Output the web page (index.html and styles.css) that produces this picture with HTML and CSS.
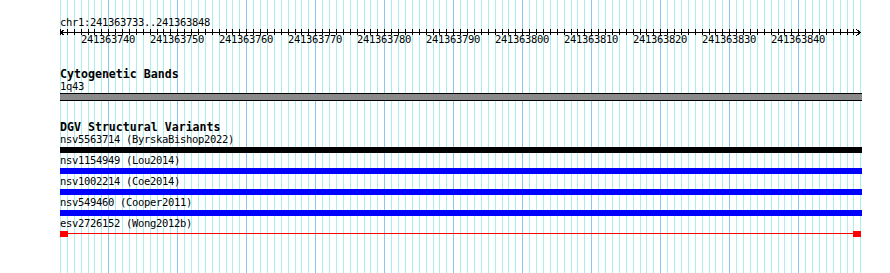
FILE: index.html
```html
<!DOCTYPE html>
<html>
<head>
<meta charset="utf-8">
<link rel="stylesheet" href="styles.css">
</head>
<body>
<div class="browser">
  <div class="canvas">
    <div class="ruler-track">
      <div class="pos">chr1:241363733..241363848</div>
      <svg class="ruler" width="802" height="18" viewBox="0 0 802 18">
        <path class="axis" d="M0 4.5H801M4.5 1.5L0.5 4.5L4.5 7.5M796.5 1.5L800.5 4.5L796.5 7.5"/>
        <path class="axis" d="M0.5 1v6M7.5 1v6M14.5 1v6M21.5 1v6M28.5 1v6M34.5 1v6M41.5 1v6M48.5 1v6M55.5 1v6M62.5 1v6M69.5 1v6M76.5 1v6M83.5 1v6M90.5 1v6M97.5 1v6M103.5 1v6M110.5 1v6M117.5 1v6M124.5 1v6M131.5 1v6M138.5 1v6M145.5 1v6M152.5 1v6M159.5 1v6M166.5 1v6M172.5 1v6M179.5 1v6M186.5 1v6M193.5 1v6M200.5 1v6M207.5 1v6M214.5 1v6M221.5 1v6M228.5 1v6M235.5 1v6M241.5 1v6M248.5 1v6M255.5 1v6M262.5 1v6M269.5 1v6M276.5 1v6M283.5 1v6M290.5 1v6M297.5 1v6M304.5 1v6M310.5 1v6M317.5 1v6M324.5 1v6M331.5 1v6M338.5 1v6M345.5 1v6M352.5 1v6M359.5 1v6M366.5 1v6M373.5 1v6M379.5 1v6M386.5 1v6M393.5 1v6M400.5 1v6M407.5 1v6M414.5 1v6M421.5 1v6M428.5 1v6M435.5 1v6M442.5 1v6M448.5 1v6M455.5 1v6M462.5 1v6M469.5 1v6M476.5 1v6M483.5 1v6M490.5 1v6M497.5 1v6M504.5 1v6M511.5 1v6M517.5 1v6M524.5 1v6M531.5 1v6M538.5 1v6M545.5 1v6M552.5 1v6M559.5 1v6M566.5 1v6M573.5 1v6M580.5 1v6M586.5 1v6M593.5 1v6M600.5 1v6M607.5 1v6M614.5 1v6M621.5 1v6M628.5 1v6M635.5 1v6M642.5 1v6M649.5 1v6M655.5 1v6M662.5 1v6M669.5 1v6M676.5 1v6M683.5 1v6M690.5 1v6M697.5 1v6M704.5 1v6M711.5 1v6M718.5 1v6M724.5 1v6M731.5 1v6M738.5 1v6M745.5 1v6M752.5 1v6M759.5 1v6M766.5 1v6M773.5 1v6M780.5 1v6M787.5 1v6M793.5 1v6"/>
        <g class="tick-labels">
          <text x="48" y="14.5">241363740</text>
          <text x="117" y="14.5">241363750</text>
          <text x="186" y="14.5">241363760</text>
          <text x="255" y="14.5">241363770</text>
          <text x="324" y="14.5">241363780</text>
          <text x="393" y="14.5">241363790</text>
          <text x="462" y="14.5">241363800</text>
          <text x="531" y="14.5">241363810</text>
          <text x="600" y="14.5">241363820</text>
          <text x="669" y="14.5">241363830</text>
          <text x="738" y="14.5">241363840</text>
        </g>
      </svg>
    </div>

    <section class="track cyto">
      <div class="track-title">Cytogenetic Bands</div>
      <div class="feat-label">1q43</div>
      <div class="band"></div>
    </section>

    <section class="track dgv">
      <div class="track-title">DGV Structural Variants</div>
      <div class="feature">
        <div class="feat-label">nsv5563714 (ByrskaBishop2022)</div>
        <div class="bar bar-black"></div>
      </div>
      <div class="feature">
        <div class="feat-label">nsv1154949 (Lou2014)</div>
        <div class="bar bar-blue"></div>
      </div>
      <div class="feature">
        <div class="feat-label">nsv1002214 (Coe2014)</div>
        <div class="bar bar-blue"></div>
      </div>
      <div class="feature">
        <div class="feat-label">nsv549460 (Cooper2011)</div>
        <div class="bar bar-blue"></div>
      </div>
      <div class="feature">
        <div class="feat-label">esv2726152 (Wong2012b)</div>
        <div class="split"><span class="split-end"></span><span class="split-end"></span></div>
      </div>
    </section>
  </div>
</div>
</body>
</html>
```

FILE: styles.css
```css
html, body {
  margin: 0;
  padding: 0;
  background: #fff;
}

.browser {
  width: 890px;
  height: 273px;
  overflow: hidden;
  background: #fff;
}

.canvas {
  margin-left: 60px;
  width: 802px;
  height: 273px;
  box-sizing: border-box;
  padding-top: 16px;
  color: #000;
  background-image: repeating-linear-gradient(to right,
    #aaeeee 0 1px, transparent 1px 7px,
    #aaeeee 7px 8px, transparent 8px 14px,
    #aaeeee 14px 15px, transparent 15px 21px,
    #aaeeee 21px 22px, transparent 22px 28px,
    #aaeeee 28px 29px, transparent 29px 34px,
    #aaeeee 34px 35px, transparent 35px 41px,
    #aaeeee 41px 42px, transparent 42px 48px,
    #88c8f0 48px 49px, transparent 49px 55px,
    #aaeeee 55px 56px, transparent 56px 62px,
    #aaeeee 62px 63px, transparent 63px 69px);
  background-size: 801px 100%;
  background-repeat: no-repeat;
}

.pos,
.feat-label {
  font-family: "DejaVu Sans Mono", monospace;
  font-size: 10.5px;
  letter-spacing: -0.32px;
  line-height: 12px;
  height: 12px;
  white-space: nowrap;
}

.ruler {
  display: block;
  shape-rendering: crispEdges;
}

.axis {
  fill: none;
  stroke: #000;
  stroke-width: 1;
}

.tick-labels text {
  font-family: "DejaVu Sans Mono", monospace;
  font-size: 10.5px;
  letter-spacing: -0.32px;
  text-anchor: middle;
  fill: #000;
}

.track-title {
  font-family: "DejaVu Sans Mono", monospace;
  font-weight: bold;
  font-size: 11.6px;
  line-height: 11px;
  height: 11px;
  white-space: nowrap;
}

.cyto {
  margin-top: 23px;
}

.band {
  margin-top: 1px;
  height: 6px;
  border-top: 1px solid #000;
  border-bottom: 1px solid #000;
  background: #8a8a8a;
}

.dgv {
  margin-top: 21px;
}

.feature {
  display: flex;
  flex-direction: column;
  gap: 2px;
  padding-bottom: 1px;
}

.bar {
  height: 6px;
}

.bar-black {
  background: #000;
}

.bar-blue {
  background: #0000ff;
}

.split {
  width: 801px;
  height: 6px;
  display: flex;
  justify-content: space-between;
  background: linear-gradient(#ff0000, #ff0000) 0 2px / 100% 1px no-repeat;
}

.split-end {
  width: 8px;
  height: 6px;
  background: #ff0000;
}
```
